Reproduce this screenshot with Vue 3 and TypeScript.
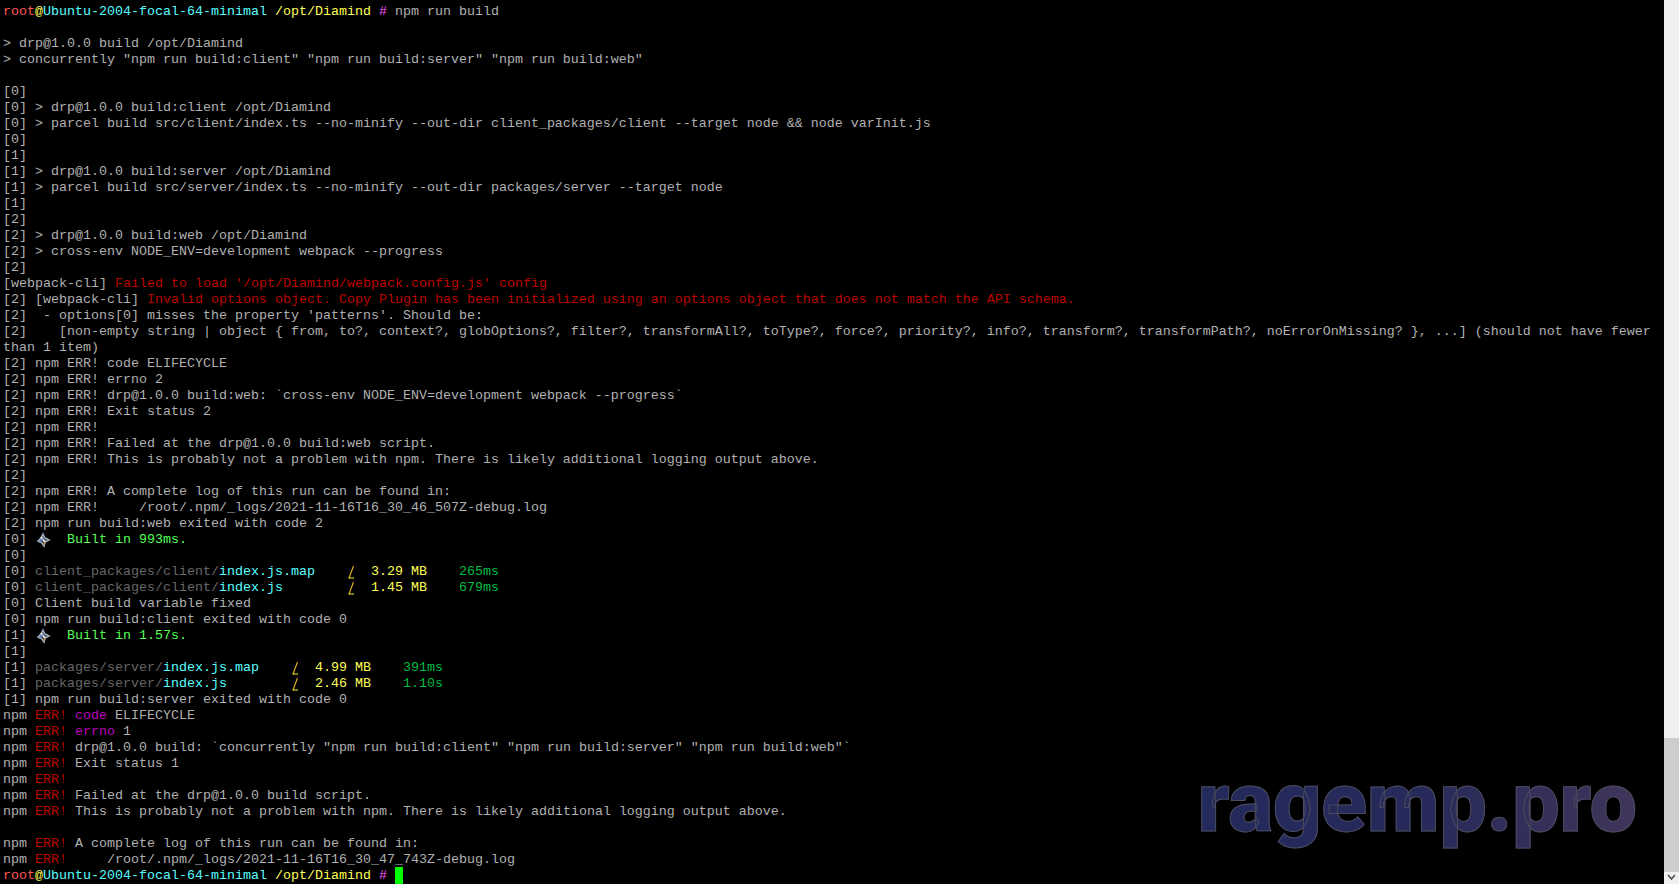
<script setup lang="ts">
type Seg = [string, string];
type Line = Seg[];

const g = (text: string): Line => [['', text]];
const prompt: Line = [
  ['pr', 'root'],
  ['yb', '@'],
  ['cy', 'Ubuntu-2004-focal-64-minimal'],
  ['', ' '],
  ['yb', '/opt/Diamind'],
  ['', ' '],
  ['mb', '#'],
  ['', ' '],
];
const err = (kind: string, text: string): Line => [
  ['', 'npm '],
  ['rd', 'ERR!'],
  ['', ' '],
  ...(kind ? ([['mg', kind]] as Line) : []),
  ['', text],
];
const built = (tag: string, text: string): Line => [
  ['', tag + ' '],
  ['@star', ''],
  ['', '  '],
  ['gb', text],
];
const asset = (tag: string, path: string, file: string, gap: string, size: string, time: string): Line => [
  ['', tag + ' '],
  ['dim', path],
  ['cy', file],
  ['', gap],
  ['@bolt', ''],
  ['', '  '],
  ['yb', size],
  ['', '    '],
  ['gn', time],
];

const lines: Line[] = [
  [...prompt, ['', 'npm run build']],
  g(''),
  g('> drp@1.0.0 build /opt/Diamind'),
  g('> concurrently "npm run build:client" "npm run build:server" "npm run build:web"'),
  g(''),
  g('[0]'),
  g('[0] > drp@1.0.0 build:client /opt/Diamind'),
  g('[0] > parcel build src/client/index.ts --no-minify --out-dir client_packages/client --target node && node varInit.js'),
  g('[0]'),
  g('[1]'),
  g('[1] > drp@1.0.0 build:server /opt/Diamind'),
  g('[1] > parcel build src/server/index.ts --no-minify --out-dir packages/server --target node'),
  g('[1]'),
  g('[2]'),
  g('[2] > drp@1.0.0 build:web /opt/Diamind'),
  g('[2] > cross-env NODE_ENV=development webpack --progress'),
  g('[2]'),
  [['', '[webpack-cli] '], ['rd', "Failed to load '/opt/Diamind/webpack.config.js' config"]],
  [['', '[2] [webpack-cli] '], ['rd', 'Invalid options object. Copy Plugin has been initialized using an options object that does not match the API schema.']],
  g("[2]  - options[0] misses the property 'patterns'. Should be:"),
  g('[2]    [non-empty string | object { from, to?, context?, globOptions?, filter?, transformAll?, toType?, force?, priority?, info?, transform?, transformPath?, noErrorOnMissing? }, ...] (should not have fewer'),
  g('than 1 item)'),
  g('[2] npm ERR! code ELIFECYCLE'),
  g('[2] npm ERR! errno 2'),
  g('[2] npm ERR! drp@1.0.0 build:web: `cross-env NODE_ENV=development webpack --progress`'),
  g('[2] npm ERR! Exit status 2'),
  g('[2] npm ERR!'),
  g('[2] npm ERR! Failed at the drp@1.0.0 build:web script.'),
  g('[2] npm ERR! This is probably not a problem with npm. There is likely additional logging output above.'),
  g('[2]'),
  g('[2] npm ERR! A complete log of this run can be found in:'),
  g('[2] npm ERR!     /root/.npm/_logs/2021-11-16T16_30_46_507Z-debug.log'),
  g('[2] npm run build:web exited with code 2'),
  built('[0]', 'Built in 993ms.'),
  g('[0]'),
  asset('[0]', 'client_packages/client/', 'index.js.map', '    ', '3.29 MB', '265ms'),
  asset('[0]', 'client_packages/client/', 'index.js', '        ', '1.45 MB', '679ms'),
  g('[0] Client build variable fixed'),
  g('[0] npm run build:client exited with code 0'),
  built('[1]', 'Built in 1.57s.'),
  g('[1]'),
  asset('[1]', 'packages/server/', 'index.js.map', '    ', '4.99 MB', '391ms'),
  asset('[1]', 'packages/server/', 'index.js', '        ', '2.46 MB', '1.10s'),
  g('[1] npm run build:server exited with code 0'),
  err('code', ' ELIFECYCLE'),
  err('errno', ' 1'),
  err('', 'drp@1.0.0 build: `concurrently "npm run build:client" "npm run build:server" "npm run build:web"`'),
  err('', 'Exit status 1'),
  err('', ''),
  err('', 'Failed at the drp@1.0.0 build script.'),
  err('', 'This is probably not a problem with npm. There is likely additional logging output above.'),
  g(''),
  err('', 'A complete log of this run can be found in:'),
  err('', '    /root/.npm/_logs/2021-11-16T16_30_47_743Z-debug.log'),
  [...prompt, ['@cursor', '']],
];
</script>

<template>
  <div class="window">
    <div class="terminal">
      <div v-for="(line, i) in lines" :key="i" class="line">
        <template v-for="(seg, j) in line" :key="j">
          <svg v-if="seg[0] === '@star'" class="star" width="16" height="16" viewBox="0 0 16 16">
            <path d="M8 2 L10 6 L14 8 L10 10 L9 14 L7 11 L3 9 L6 6 Z" fill="#39424f" stroke="#9aa8bc" stroke-width="1.6" />
            <path d="M6 5 L10 10" stroke="#efe8d4" stroke-width="2" />
            <path d="M5 9 L8 7" stroke="#5f86c8" stroke-width="1.6" />
            <path d="M9 13 L10 10" stroke="#c8863c" stroke-width="1.2" />
          </svg>
          <svg v-else-if="seg[0] === '@bolt'" class="bolt" width="8" height="16" viewBox="0 0 8 16">
            <path d="M6.5 2 L2 14" stroke="#e0b020" stroke-width="1.2" fill="none" />
            <path d="M1.5 14 H7" stroke="#c8d820" stroke-width="1.2" fill="none" />
          </svg>
          <span v-else-if="seg[0] === '@cursor'" class="cursor"></span>
          <span v-else :class="seg[0]">{{ seg[1] }}</span>
        </template>
      </div>
      <div class="watermark">ragemp.pro</div>
    </div>
    <div class="scrollbar">
      <div class="track"></div>
      <div class="thumb"></div>
      <svg class="arrow" width="15" height="12" viewBox="0 0 15 12">
        <path d="M4 3 L7.5 7 L11 3" fill="none" stroke="#505050" stroke-width="1.6" />
      </svg>
    </div>
  </div>
</template>

<style>
html,
body {
  margin: 0;
  background: #000;
  overflow: hidden;
}
</style>

<style scoped>
.window {
  display: flex;
  width: 1679px;
  height: 884px;
  overflow: hidden;
}
.terminal {
  position: relative;
  flex: 1;
  min-width: 0;
  padding: 4px 0 0 3px;
  background: #000;
  color: #b0b0b0;
  font-family: "Liberation Mono", "DejaVu Sans Mono", monospace;
  font-size: 13.333px;
  line-height: 16px;
  overflow: hidden;
}
.line {
  display: flex;
  height: 16px;
  white-space: pre;
}
.pr { color: #ff5555; }
.yb { color: #ffff55; }
.cy { color: #55ffff; }
.mb { color: #ff55ff; }
.rd { color: #bb0000; }
.mg { color: #bb00bb; }
.gb { color: #55ff55; }
.gn { color: #00bb44; }
.dim { color: #666666; }
.cursor {
  width: 8px;
  height: 17px;
  margin-top: -1px;
  background: #00ff00;
}
.star,
.bolt {
  flex: none;
  display: block;
}
.watermark {
  position: absolute;
  right: 26px;
  bottom: 31px;
  font-family: Roboto, "Liberation Sans", sans-serif;
  font-size: 84px;
  font-weight: 900;
  line-height: 100px;
  white-space: pre;
  background: linear-gradient(90deg, #232a5c 0%, #262a5a 50%, #40345a 100%);
  -webkit-background-clip: text;
  background-clip: text;
  color: transparent;
  -webkit-text-stroke: 1px #4a4a5c;
}
.scrollbar {
  display: flex;
  flex-direction: column;
  flex: none;
  width: 15px;
  margin-left: 1px;
  background: #f0f0f0;
}
.track {
  flex: 1;
}
.thumb {
  height: 134px;
  background: #cdcdcd;
}
.arrow {
  display: block;
  flex: none;
}
</style>
